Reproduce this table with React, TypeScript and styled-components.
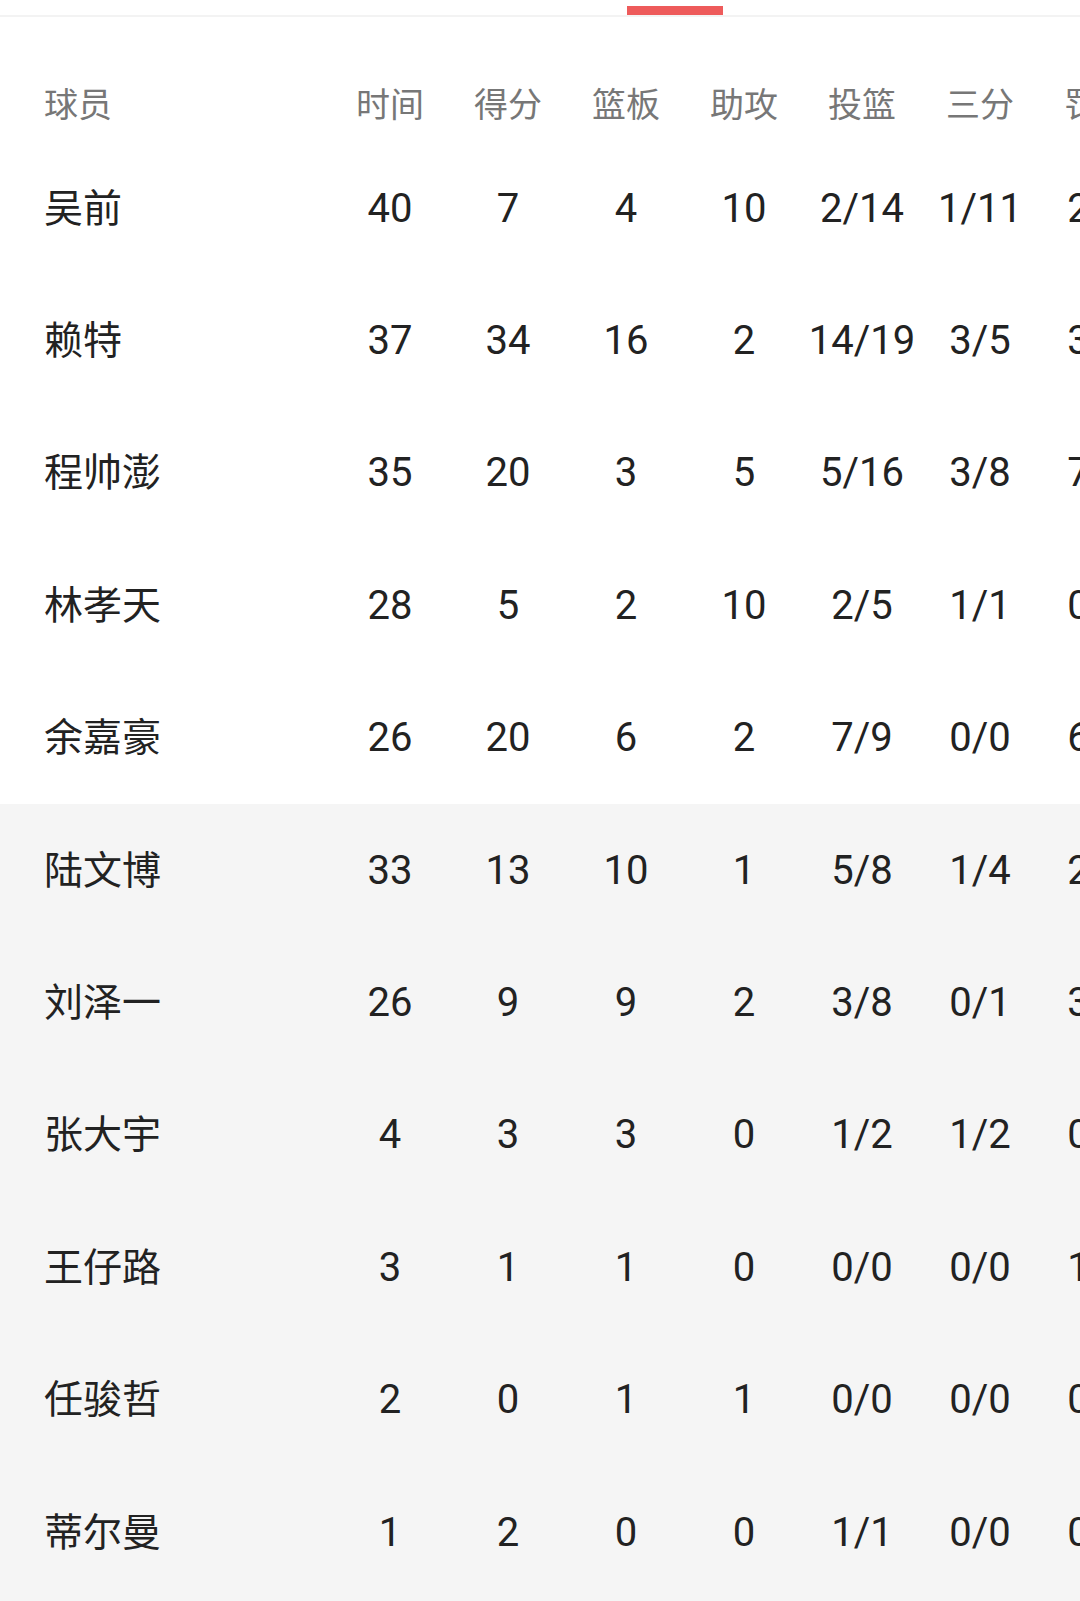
import { createGlobalStyle } from "styled-components";
import styled from "styled-components";

const GlobalStyle = createGlobalStyle`
   html, body {
      margin: 0;
      padding: 0;
      background: #ffffff;
   }
   body {
      font-family: Roboto, "Noto Sans CJK SC", "Noto Sans", sans-serif;
      -webkit-font-smoothing: antialiased;
   }
`;

const Page = styled.div`
   width: 1080px;
   min-height: 100vh;
   overflow: hidden;
   background: #f5f5f5;
`;

const TabStrip = styled.div`
   height: 15px;
   background: #ffffff;
   border-bottom: 2px solid #f3f3f3;
   display: flex;
   justify-content: flex-start;
   align-items: flex-end;
   padding-left: 627px;
`;

const TabIndicator = styled.div`
   width: 96px;
   height: 9px;
   background: #ee5b5b;
`;

const Table = styled.div`
   display: flex;
   flex-direction: column;
`;

const Row = styled.div<{ $bench?: boolean }>`
   display: grid;
   grid-template-columns: 331px repeat(8, 118px);
   align-items: center;
   height: 132.4px;
   background: ${({ $bench }) => ($bench ? "#f5f5f5" : "#ffffff")};
`;

const HeaderRow = styled(Row)`
   height: 125px;
   padding-top: 45px;
   box-sizing: border-box;
`;

const NameCell = styled.div<{ $head?: boolean }>`
   padding-left: 44px;
   padding-bottom: ${({ $head }) => ($head ? "0" : "7px")};
   font-size: ${({ $head }) => ($head ? "34px" : "39px")};
   color: ${({ $head }) => ($head ? "#777777" : "#222222")};
   white-space: nowrap;
`;

const StatCell = styled.div<{ $head?: boolean }>`
   text-align: center;
   font-size: ${({ $head }) => ($head ? "34px" : "40px")};
   color: ${({ $head }) => ($head ? "#777777" : "#222222")};
   white-space: nowrap;
`;

const columns = ["时间", "得分", "篮板", "助攻", "投篮", "三分", "罚球", "抢断"];

type Player = { name: string; stats: string[]; bench?: boolean };

const players: Player[] = [
   { name: "吴前", stats: ["40", "7", "4", "10", "2/14", "1/11", "2/2", "1"] },
   { name: "赖特", stats: ["37", "34", "16", "2", "14/19", "3/5", "3/4", "2"] },
   { name: "程帅澎", stats: ["35", "20", "3", "5", "5/16", "3/8", "7/8", "0"] },
   { name: "林孝天", stats: ["28", "5", "2", "10", "2/5", "1/1", "0/0", "1"] },
   { name: "余嘉豪", stats: ["26", "20", "6", "2", "7/9", "0/0", "6/6", "0"] },
   { name: "陆文博", stats: ["33", "13", "10", "1", "5/8", "1/4", "2/2", "1"], bench: true },
   { name: "刘泽一", stats: ["26", "9", "9", "2", "3/8", "0/1", "3/4", "0"], bench: true },
   { name: "张大宇", stats: ["4", "3", "3", "0", "1/2", "1/2", "0/0", "0"], bench: true },
   { name: "王仔路", stats: ["3", "1", "1", "0", "0/0", "0/0", "1/2", "0"], bench: true },
   { name: "任骏哲", stats: ["2", "0", "1", "1", "0/0", "0/0", "0/0", "0"], bench: true },
   { name: "蒂尔曼", stats: ["1", "2", "0", "0", "1/1", "0/0", "0/0", "0"], bench: true },
];

export default function App() {
   return (
      <Page>
         <GlobalStyle />
         <TabStrip>
            <TabIndicator />
         </TabStrip>
         <Table>
            <HeaderRow>
               <NameCell $head>球员</NameCell>
               {columns.map((c) => (
                  <StatCell $head key={c}>
                     {c}
                  </StatCell>
               ))}
            </HeaderRow>
            {players.map((p) => (
               <Row $bench={p.bench} key={p.name}>
                  <NameCell>{p.name}</NameCell>
                  {p.stats.map((s, i) => (
                     <StatCell key={i}>{s}</StatCell>
                  ))}
               </Row>
            ))}
         </Table>
      </Page>
   );
}
